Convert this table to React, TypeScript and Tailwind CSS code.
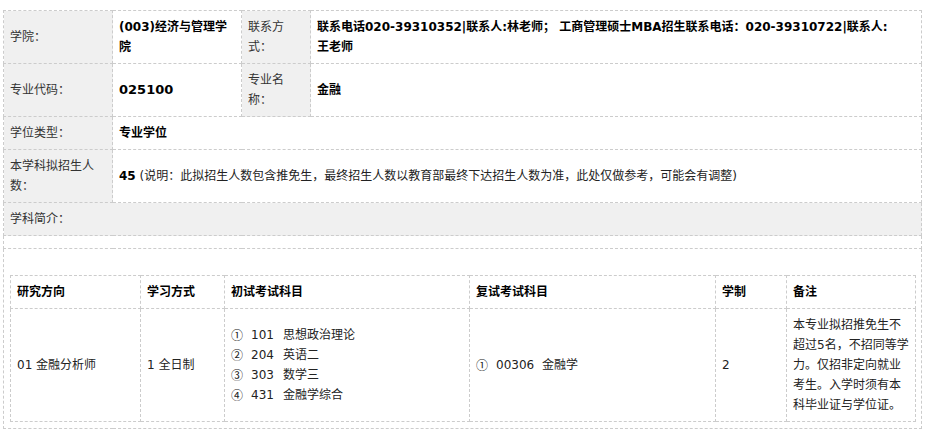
import React from 'react';

const font = "font-['DejaVu_Sans','Noto_Sans_CJK_SC',sans-serif]";
const cjk = "font-['Noto_Sans_CJK_SC',sans-serif]";
const cell = 'border border-dashed border-[#cccccc] px-[6px] py-[6px] align-middle text-left';
const label = `${cell} bg-[#f0f0f0] text-[#333333] font-normal`;
const value = `${cell} bg-white text-black font-bold`;

const EXAMS = [
  ['①', '101', '思想政治理论'],
  ['②', '204', '英语二'],
  ['③', '303', '数学三'],
  ['④', '431', '金融学综合'],
];

const App: React.FC = () => {
  return (
    <div className={`${font} min-h-[435px] bg-white pl-[3px] pt-[10px] text-[12px] leading-[20px]`}>
      <table className="w-[919px] table-fixed border-collapse">
        <colgroup>
          <col className="w-[109px]" />
          <col className="w-[129px]" />
          <col className="w-[69px]" />
          <col />
        </colgroup>
        <tbody>
          <tr>
            <td className={label}>学院：</td>
            <td className={value}>(003)经济与管理学院</td>
            <td className={label}>联系方式：</td>
            <td className={value}>
              联系电话020-39310352|联系人:林老师； 工商管理硕士MBA招生联系电话：020-39310722|联系人:
              <br />
              王老师
            </td>
          </tr>
          <tr>
            <td className={label}>专业代码：</td>
            <td className={`${value} text-[13px]`}>025100</td>
            <td className={label}>专业名称：</td>
            <td className={value}>金融</td>
          </tr>
          <tr>
            <td className={label}>学位类型：</td>
            <td className={value} colSpan={3}>专业学位</td>
          </tr>
          <tr>
            <td className={label}>本学科拟招生人数：</td>
            <td className={`${cell} text-[#222222]`} colSpan={3}>
              <span className="font-bold text-black">45</span> (说明：此拟招生人数包含推免生，最终招生人数以教育部最终下达招生人数为准，此处仅做参考，可能会有调整)
            </td>
          </tr>
          <tr>
            <td className={label} colSpan={4}>学科简介：</td>
          </tr>
          <tr>
            <td className={`${cell} h-[13px] p-0`} colSpan={4}></td>
          </tr>
          <tr>
            <td className={`${cell} pt-[26px]`} colSpan={4}>
              <table className="w-[905px] table-fixed border-collapse">
                <colgroup>
                  <col className="w-[130px]" />
                  <col className="w-[84px]" />
                  <col className="w-[245px]" />
                  <col className="w-[246px]" />
                  <col className="w-[71px]" />
                  <col className="w-[129px]" />
                </colgroup>
                <thead>
                  <tr>
                    <th className={`${cell} font-bold text-black`}>研究方向</th>
                    <th className={`${cell} font-bold text-black`}>学习方式</th>
                    <th className={`${cell} font-bold text-black`}>初试考试科目</th>
                    <th className={`${cell} font-bold text-black`}>复试考试科目</th>
                    <th className={`${cell} font-bold text-black`}>学制</th>
                    <th className={`${cell} font-bold text-black`}>备注</th>
                  </tr>
                </thead>
                <tbody>
                  <tr className="text-[#222222]">
                    <td className={cell}>01 金融分析师</td>
                    <td className={cell}>1 全日制</td>
                    <td className={cell}>
                      {EXAMS.map(([n, code, name]) => (
                        <div key={code} className="flex">
                          <span className={`${cjk} w-[20px]`}>{n}</span>
                          <span className="w-[32px]">{code}</span>
                          <span>{name}</span>
                        </div>
                      ))}
                    </td>
                    <td className={cell}>
                      <div className="flex">
                        <span className={`${cjk} w-[20px]`}>①</span>
                        <span className="w-[46px]">00306</span>
                        <span>金融学</span>
                      </div>
                    </td>
                    <td className={cell}>2</td>
                    <td className={cell}>
                      本专业拟招推免生不超过5名，不招同等学力。仅招非定向就业考生。入学时须有本科毕业证与学位证。
                    </td>
                  </tr>
                </tbody>
              </table>
            </td>
          </tr>
        </tbody>
      </table>
    </div>
  );
};

export default App;
